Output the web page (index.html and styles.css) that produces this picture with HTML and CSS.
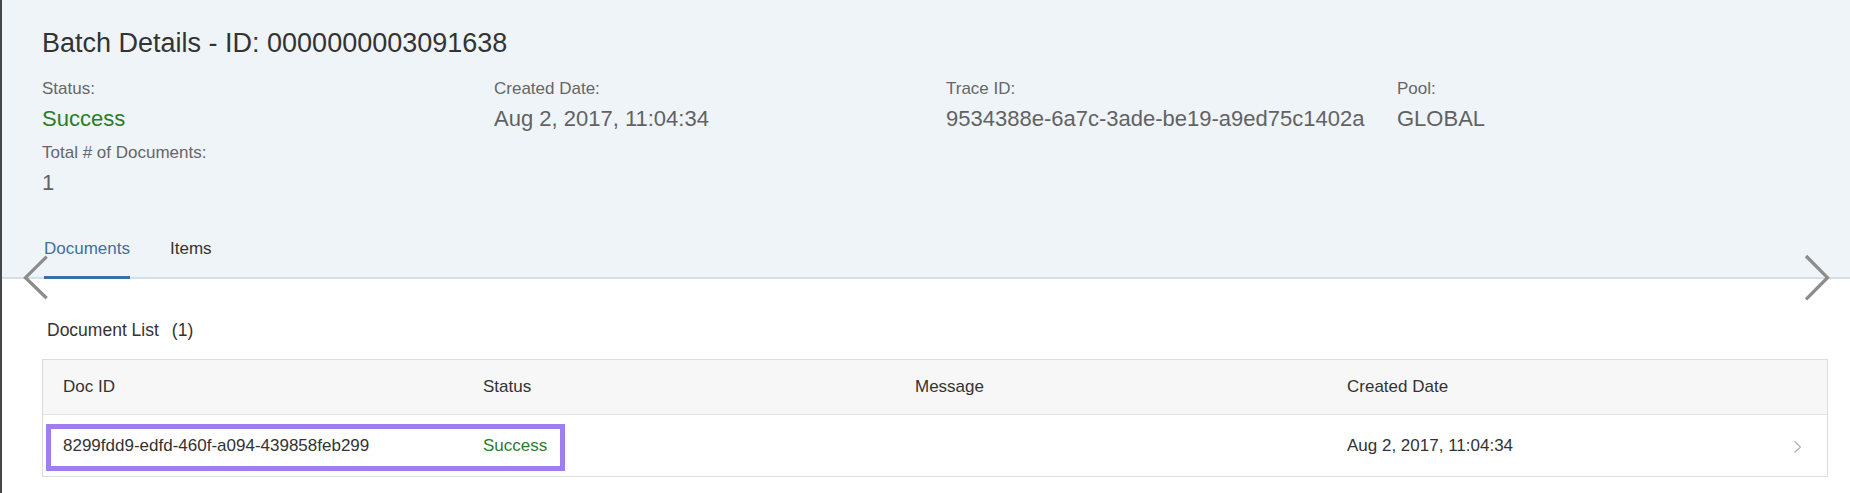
FILE: index.html
```html
<!DOCTYPE html>
<html lang="en">
<head>
<meta charset="utf-8">
<title>Batch Details</title>
<link rel="stylesheet" href="styles.css">
</head>
<body>
<div class="page">
  <header class="obj-header">
    <div class="header-main">
      <h1 class="title">Batch Details - ID: 0000000003091638</h1>
      <div class="attrs">
        <div class="attr">
          <div class="label">Status:</div>
          <div class="value success">Success</div>
        </div>
        <div class="attr">
          <div class="label">Created Date:</div>
          <div class="value">Aug 2, 2017, 11:04:34</div>
        </div>
        <div class="attr">
          <div class="label">Trace ID:</div>
          <div class="value">9534388e-6a7c-3ade-be19-a9ed75c1402a</div>
        </div>
        <div class="attr">
          <div class="label">Pool:</div>
          <div class="value">GLOBAL</div>
        </div>
        <div class="attr">
          <div class="label">Total # of Documents:</div>
          <div class="value">1</div>
        </div>
      </div>
    </div>
    <nav class="tabs">
      <span class="tab active">Documents</span>
      <span class="tab">Items</span>
    </nav>
  </header>

  <main class="content">
    <h2 class="list-title">Document List<span class="count">(1)</span></h2>
    <div class="table">
      <div class="row thead">
        <div class="cell">Doc ID</div>
        <div class="cell">Status</div>
        <div class="cell">Message</div>
        <div class="cell">Created Date</div>
        <div class="cell nav"></div>
      </div>
      <div class="row tbody">
        <div class="cell">8299fdd9-edfd-460f-a094-439858feb299</div>
        <div class="cell success">Success</div>
        <div class="cell"></div>
        <div class="cell">Aug 2, 2017, 11:04:34</div>
        <div class="cell nav">
          <svg class="row-chevron" width="10" height="14" viewBox="0 0 10 14"><polyline points="1.5,1.5 7.5,7 1.5,12.5" fill="none" stroke="#b3b3b3" stroke-width="1.2"/></svg>
        </div>
      </div>
    </div>
  </main>

  <svg class="nav-arrow prev" width="30" height="52" viewBox="0 0 30 52"><polyline points="26.7,4.7 5.5,25.7 26.7,46.3" fill="none" stroke="#8c8c8c" stroke-width="3.3"/></svg>
  <svg class="nav-arrow next" width="30" height="52" viewBox="0 0 30 52"><polyline points="4,4 25.5,25.7 4,47.3" fill="none" stroke="#8c8c8c" stroke-width="3.3"/></svg>
  <div class="highlight"></div>
</div>
</body>
</html>
```

FILE: styles.css
```css
* { box-sizing: border-box; }

html, body {
  margin: 0;
  padding: 0;
  background: #ffffff;
}

body {
  font-family: "Liberation Sans", Arial, Helvetica, sans-serif;
  color: #333333;
  width: 1850px;
  height: 493px;
  overflow: hidden;
}

.page {
  position: relative;
  width: 1850px;
  height: 493px;
}

.page::before {
  content: "";
  position: absolute;
  left: 0;
  top: 0;
  bottom: 0;
  width: 2px;
  background: #464646;
  z-index: 2;
}

.obj-header {
  background: #eff4f9;
}

.header-main {
  padding: 27px 0 0 42px;
}

.title {
  margin: 0;
  font-size: 27px;
  line-height: 32px;
  font-weight: normal;
  color: #333333;
}

.attrs {
  margin-top: 20px;
  display: grid;
  grid-template-columns: 452px 452px 451px 452px;
  row-gap: 11px;
}

.label {
  font-size: 17px;
  line-height: 20px;
  color: #666666;
}

.value {
  margin-top: 7px;
  font-size: 22px;
  line-height: 26px;
  color: #626262;
  white-space: nowrap;
}

.success {
  color: #2b7c2b;
}

.value.success {
  color: #2b7c2b;
}

.tabs {
  margin-top: 43px;
  padding-left: 44px;
  display: flex;
  gap: 40px;
  border-bottom: 2px solid #d3dfeb;
}

.tab {
  font-size: 17px;
  line-height: 20px;
  padding-bottom: 17px;
  margin-bottom: -2px;
  border-bottom: 3px solid transparent;
  color: #333333;
}

.tab.active {
  color: #3f6ea2;
  border-bottom-color: #3a6ea5;
}

.content {
  padding: 0 22px 0 42px;
}

.list-title {
  margin: 41px 0 0 5px;
  font-size: 17.5px;
  line-height: 20px;
  font-weight: normal;
  color: #333333;
}

.count {
  margin-left: 13px;
}

.table {
  margin-top: 19px;
  border: 1px solid #dcdcdc;
}

.row {
  display: grid;
  grid-template-columns: 420px 432px 432px 432px 1fr;
  align-items: center;
  font-size: 17px;
  line-height: 20px;
  color: #333333;
}

.thead {
  height: 55px;
  background: #f7f7f7;
  border-bottom: 1px solid #e3e3e3;
}

.tbody {
  height: 61px;
  background: #ffffff;
}

.cell {
  padding-left: 20px;
  white-space: nowrap;
}

.cell.nav {
  display: flex;
  justify-content: flex-end;
  padding-right: 24px;
}

.row-chevron {
  display: block;
  margin-top: 2px;
}

.nav-arrow {
  position: absolute;
  top: 252px;
  display: block;
}

.nav-arrow.prev {
  left: 20px;
}

.nav-arrow.next {
  left: 1802px;
}

.highlight {
  position: absolute;
  left: 46px;
  top: 424px;
  width: 519px;
  height: 47px;
  border: 5px solid #9f7df3;
  pointer-events: none;
}
```
